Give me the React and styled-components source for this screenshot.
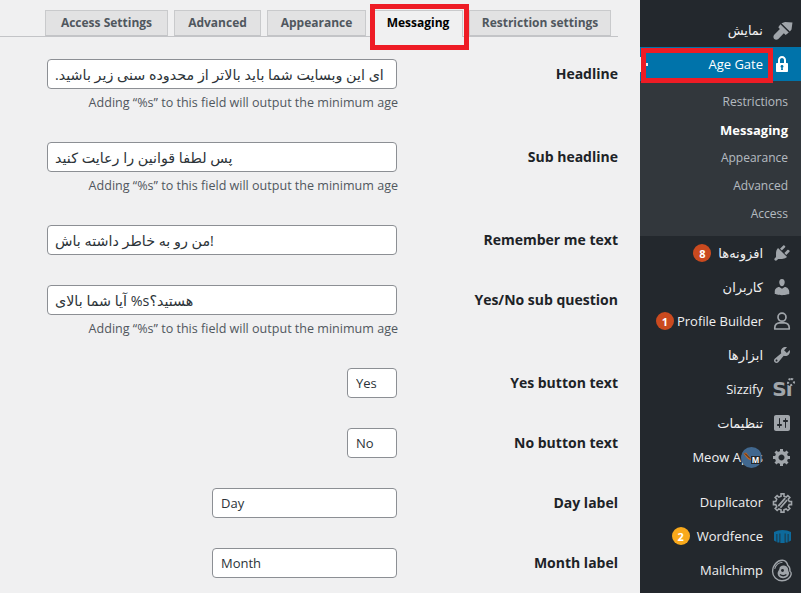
import React from "react";
import styled, { createGlobalStyle } from "styled-components";

const GlobalStyle = createGlobalStyle`
  html, body {
    margin: 0;
    height: 100%;
    overflow: hidden;
    background: #f0f0f1;
  }
  * { box-sizing: border-box; }
`;

const uiFont = `"Open Sans", "DejaVu Sans", sans-serif`;

const Page = styled.div`
  display: flex;
  width: 801px;
  height: 593px;
  overflow: hidden;
  font-family: ${uiFont};
`;

const Content = styled.main`
  width: 640px;
  flex: none;
`;

const TabBar = styled.nav`
  display: flex;
  gap: 6px;
  width: 618px;
  height: 37px;
  padding: 10px 0 0 45px;
  border-bottom: 1px solid #c3c4c7;
`;

const Tab = styled.div`
  position: relative;
  width: ${(p) => p.$w}px;
  height: ${(p) => (p.$active ? 27 : 26)}px;
  flex: none;
  margin-left: ${(p) => (p.$active ? 1 : 0)}px;
  border: 1px solid #c9cacc;
  border-bottom: ${(p) => (p.$active ? "none" : "1px solid #c3c4c7")};
  background: ${(p) => (p.$active ? "#f0f0f1" : "#e2e2e3")};
  color: ${(p) => (p.$active ? "#000" : "#50575e")};
  font-size: 12px;
  font-weight: 700;
  line-height: 24px;
  text-align: center;
  white-space: nowrap;
`;

const TabHighlight = styled.span`
  position: absolute;
  left: -4px;
  top: -7px;
  width: 99px;
  height: 46px;
  border: 5px solid #ee1c25;
`;

const Form = styled.div`
  display: flex;
  flex-direction: column;
  gap: 30px;
  width: 618px;
  padding-top: 22px;
`;

const Row = styled.div`
  display: grid;
  grid-template-columns: 397px 221px;
  align-items: start;
`;

const Field = styled.div`
  display: flex;
  flex-direction: column;
  align-items: flex-end;
`;

const TextInput = styled.input`
  display: block;
  width: ${(p) => p.$w}px;
  height: 30px;
  padding: ${(p) => (p.$fa ? "0 3px 0 7px" : "0 8px")};
  border: 1px solid #8c8f94;
  border-radius: 4px;
  background: #fff;
  color: #2c3338;
  font-family: ${uiFont};
  font-size: ${(p) => (p.$fa ? 14.3 : 13)}px;
  outline: none;
`;

const Hint = styled.p`
  margin: 5px -1px 0 0;
  height: 18px;
  color: #50575e;
  font-size: 12.55px;
  line-height: 18px;
  white-space: nowrap;
`;

const Label = styled.label`
  color: #1d2327;
  font-size: 14px;
  font-weight: 700;
  line-height: 30px;
  text-align: right;
`;

const Sidebar = styled.aside`
  width: 161px;
  flex: none;
  padding-top: 13px;
  background: #23282d;
  overflow: hidden;
`;

const MenuItem = styled.div`
  position: relative;
  display: flex;
  align-items: center;
  justify-content: flex-end;
  height: 34px;
  margin-bottom: ${(p) => (p.$sep ? 11 : 0)}px;
  background: ${(p) => (p.$current ? "#0073aa" : "transparent")};
  color: ${(p) => (p.$current ? "#fff" : "#f0f0f1")};
  font-size: 13px;
  white-space: nowrap;
`;

const IconSlot = styled.span`
  display: flex;
  align-items: center;
  justify-content: center;
  width: 38px;
  height: 100%;
  flex: none;
  color: ${(p) => p.$color || "#a0a5aa"};

  svg {
    display: block;
    fill: currentColor;
  }
`;

const Badge = styled.span`
  display: flex;
  align-items: center;
  justify-content: center;
  width: 18px;
  height: 18px;
  margin-right: ${(p) => p.$gap}px;
  border-radius: 50%;
  background: ${(p) => p.$bg || "#ca4a1f"};
  color: #fff;
  font-size: 11px;
  font-weight: 700;
`;

const MeowBadge = styled.span`
  position: absolute;
  left: 101px;
  top: 7px;
  width: 21px;
  height: 21px;
`;

const MenuHighlight = styled.span`
  position: absolute;
  left: 1px;
  top: 1px;
  width: 132px;
  height: 35px;
  border: 5px solid #ee1c25;
`;

const CurrentTick = styled.span`
  position: absolute;
  left: 0;
  top: 10px;
  width: 2px;
  height: 15px;
  background: #f0f0f1;
`;

const CurrentDot = styled.span`
  position: absolute;
  left: 6px;
  top: 16px;
  width: 2px;
  height: 3px;
  background: #f0f0f1;
`;

const SubMenu = styled.div`
  padding: 7px 0 8px;
  background: #32373c;
`;

const SubItem = styled.div`
  height: 28px;
  padding-right: 13px;
  color: ${(p) => (p.$active ? "#fff" : "rgba(240, 246, 252, 0.7)")};
  font-size: ${(p) => (p.$active ? 13 : 12)}px;
  font-weight: ${(p) => (p.$active ? 700 : 400)};
  line-height: 28px;
  text-align: right;
`;

const SiMark = styled.span`
  position: relative;
  color: #a0a5aa;
  font-family: "DejaVu Sans", sans-serif;
  font-size: 20px;
  font-weight: 700;
  letter-spacing: -1px;
  line-height: 20px;
`;

const SiSpark = styled.span`
  position: absolute;
  right: -3px;
  top: -1px;
  width: 8px;
  height: 8px;
  border-radius: 50%;
  background: #23282d;
  border: 2px dotted #a0a5aa;
`;

const BrushIcon = () => (
  <svg width="21" height="21" viewBox="0 0 20 20">
    <path d="M9 3l3.500-1.200L19.500 2.300 18.600 9 17 11zM8 4l8 8-3 2.200-1.700-1.700L6 18c-1 1-2.900 1-3.900 0s-1-2.900 0-3.900l5.400-5.500L6 7z" />
  </svg>
);

const LockIcon = () => (
  <svg width="20" height="20" viewBox="0 0 20 20">
    <path d="M14 9h1c.55 0 1 .45 1 1v7c0 .55-.45 1-1 1H5c-.55 0-1-.45-1-1v-7c0-.55.45-1 1-1h1V6c0-2.21 1.79-4 4-4s4 1.79 4 4v3zm-2 0V6c0-1.1-.9-2-2-2s-2 .9-2 2v3h4zm-1 7l-.36-2.150c.51-.24.86-.75.86-1.350 0-.83-.67-1.500-1.500-1.500s-1.500.67-1.500 1.500c0 .6.35 1.110.86 1.350L9 16h2z" />
  </svg>
);

const PluginIcon = () => (
  <svg width="20" height="20" viewBox="0 0 20 20">
    <path d="M13.11 4.36L9.87 7.6 8 5.73l3.24-3.24c.35-.34 1.05-.2 1.56.32.52.51.66 1.21.31 1.55zm-8 1.77l.91-1.12 9.01 9.01-1.19.84c-.71.71-2.63 1.16-3.82 1.16H6.14L4.9 17.26c-.59.59-1.54.59-2.12 0-.59-.58-.59-1.53 0-2.12l1.24-1.24v-3.88c0-1.13.4-3.19 1.09-3.89zm7.26 3.97l3.24-3.24c.34-.35 1.04-.21 1.55.31.52.51.66 1.21.31 1.55l-3.24 3.25z" />
  </svg>
);

const UsersIcon = () => (
  <svg width="20" height="20" viewBox="0 0 20 20">
    <path d="M10 9.25c-2.27 0-2.73-3.44-2.73-3.44C7 4.02 7.82 2 9.97 2c2.16 0 2.98 2.02 2.71 3.81 0 0-.41 3.44-2.68 3.44zm0 2.57L12.72 10c2.39 0 4.52 2.33 4.52 4.53v2.49s-3.65 1.13-7.24 1.13c-3.65 0-7.24-1.13-7.24-1.13v-2.49c0-2.25 1.94-4.48 4.47-4.48z" />
  </svg>
);

const ProfileIcon = () => (
  <svg width="20" height="20" viewBox="0 0 20 20">
    <circle cx="10" cy="6.200" r="4" fill="none" stroke="currentColor" strokeWidth="1.700" />
    <path
      d="M2.800 18v-1.600c0-2.600 2.200-4.600 4.600-4.600h5.200c2.400 0 4.600 2 4.600 4.600V18z"
      fill="none"
      stroke="currentColor"
      strokeWidth="1.700"
      strokeLinejoin="round"
    />
  </svg>
);

const ToolsIcon = () => (
  <svg width="20" height="20" viewBox="0 0 20 20">
    <path d="M16.68 9.77c-1.34 1.34-3.3 1.67-4.95.99l-5.41 6.52c-.99.99-2.59.99-3.58 0s-.99-2.59 0-3.57l6.52-5.42c-.68-1.65-.35-3.61.99-4.95 1.28-1.28 3.12-1.62 4.72-1.06l-2.89 2.89 2.82 2.82 2.86-2.87c.53 1.58.18 3.39-1.08 4.65zM3.81 16.21c.4.39 1.04.39 1.43 0 .4-.4.4-1.04 0-1.43-.39-.4-1.03-.4-1.43 0-.39.39-.39 1.03 0 1.43z" />
  </svg>
);

const SettingsIcon = () => (
  <svg width="20" height="20" viewBox="0 0 20 20">
    <path d="M18 16V4c0-1.1-.9-2-2-2H4c-1.1 0-2 .9-2 2v12c0 1.1.9 2 2 2h12c1.1 0 2-.9 2-2zM8 11h1c.55 0 1 .45 1 1s-.45 1-1 1H8v1.5c0 .28-.22.5-.5.5s-.5-.22-.5-.5V13H6c-.55 0-1-.45-1-1s.45-1 1-1h1V5.5c0-.28.22-.5.5-.5s.5.22.5.5V11zm5-2h-1c-.55 0-1-.45-1-1s.45-1 1-1h1V5.5c0-.28.22-.5.5-.5s.5.22.5.5V7h1c.55 0 1 .45 1 1s-.45 1-1 1h-1v5.5c0 .28-.22.5-.5.5s-.5-.22-.5-.5V9z" />
  </svg>
);

const gearPath =
  "M18 12h-2.18c-.17.7-.44 1.35-.81 1.93l1.54 1.54-2.1 2.1-1.54-1.54c-.58.36-1.23.63-1.91.79V19H8v-2.18c-.68-.16-1.33-.43-1.91-.79l-1.54 1.54-2.12-2.12 1.54-1.54c-.36-.58-.63-1.23-.79-1.91H1V9.03h2.17c.16-.7.44-1.35.8-1.94L2.43 5.55l2.1-2.1 1.54 1.54c.58-.37 1.24-.64 1.93-.81V2h3v2.18c.68.16 1.33.43 1.91.79l1.54-1.54 2.12 2.12-1.54 1.54c.36.59.64 1.24.8 1.94H18V12zm-8.5 1.5c1.66 0 3-1.34 3-3s-1.34-3-3-3-3 1.34-3 3 1.34 3 3 3z";

const GearIcon = () => (
  <svg width="20" height="20" viewBox="0 0 20 20">
    <path d={gearPath} />
  </svg>
);

const DuplicatorIcon = () => (
  <svg width="21" height="21" viewBox="0 0 20 20">
    <path
      d="M18.600 12h-2.200l-.9 2.100 1.500 1.600-1.900 1.900-1.600-1.500-2.100.9v2.200H8.600V17l-2.100-.9-1.600 1.500L3 15.700l1.500-1.600-.9-2.100H1.400V9h2.200l.9-2.100L3 5.300l1.900-1.900 1.600 1.500 2.100-.9V1.800h2.800V4l2.100.9 1.600-1.500L17 5.300l-1.500 1.600.9 2.100h2.200z"
      fill="none"
      stroke="currentColor"
      strokeWidth="1.500"
    />
    <path d="M6 13.400 12.600 5.800M8 15l6.400-7.400" stroke="currentColor" strokeWidth="1.700" />
  </svg>
);

const WordfenceIcon = () => (
  <svg width="17" height="14" viewBox="0 0 17 14">
    <path d="M0 3 4 1.600 8.500 1l4.500 .6L17 3v8.500l-2.500 1.500V5h-.8v8.500h-2.200V4.500h-.8v9.500H6.300V4.500h-.8v9H3.300V5h-.8v8L0 11.500z" />
  </svg>
);

const MailchimpIcon = () => (
  <svg width="22" height="23" viewBox="0 0 21 22">
    <path
      d="M11 1.200C6 1 1.500 6 1.500 12c0 4.800 4 8.800 9 8.800 4.500 0 8.300-2.600 8.800-6.400.2-1.400-.5-2.300-1.200-2.700.2-2.200-.5-4.500-2-5.500C15.300 3.200 13.800 1.300 11 1.200z"
      fill="none"
      stroke="currentColor"
      strokeWidth="1.300"
    />
    <path d="M3.500 9.500C4.500 6 7.500 3.500 11 3.200" fill="none" stroke="currentColor" strokeWidth="1" />
    <path d="M8 9.500c0-2 2-3.500 4.500-3.200 2.400.3 4 2 4 4.600 0 .8.800 1.300.8 2.600 0 3-3 5-6 4.800-3-.2-5-2-5-4.500 0-1.800 1-2.500 1.700-4.300z" />
    <circle cx="11" cy="11" r="1.400" fill="#23282d" />
    <path d="M8.500 14.800c1.800 1.400 4.500 1.400 6.200 0" fill="none" stroke="#23282d" strokeWidth="1.200" />
  </svg>
);

const MeowIcon = () => (
  <svg width="21" height="21" viewBox="0 0 21 21">
    <circle cx="10.500" cy="10.500" r="10.500" fill="#41688f" />
    <path d="M2.500 6.500 5 5.500l4 5 3 1.500v1.800c-3 .2-6.500-2.500-9.500-7.300z" fill="#c9651c" />
    <path d="M4 6.500 9 11.500" stroke="#1d2327" strokeWidth="1" />
    <rect x="10" y="9" width="9" height="8" fill="#23282d" />
    <text x="14.500" y="15.500" textAnchor="middle" fontSize="8" fontWeight="700" fontFamily="Open Sans, sans-serif" fill="#fff">
      M
    </text>
  </svg>
);

const tabs = [
  { name: "Access Settings", w: 123 },
  { name: "Advanced", w: 87 },
  { name: "Appearance", w: 99 },
  { name: "Messaging", w: 90, active: true },
  { name: "Restriction settings", w: 142 },
];

const hintText = "Adding “%s” to this field will output the minimum age";

const fields = [
  {
    label: "Headline",
    value: "\u202Bای این وبسایت شما باید بالاتر از محدوده سنی زیر باشید.\u202C",
    w: 350,
    fa: true,
    hint: true,
  },
  { label: "Sub headline", value: "پس لطفا قوانین را رعایت کنید", w: 350, fa: true, hint: true },
  { label: "Remember me text", value: "من رو به خاطر داشته باش!", w: 350, fa: true },
  { label: "Yes/No sub question", value: "آیا شما بالای %sهستید؟", w: 350, fa: true, hint: true },
  { label: "Yes button text", value: "Yes", w: 50 },
  { label: "No button text", value: "No", w: 50 },
  { label: "Day label", value: "Day", w: 185 },
  { label: "Month label", value: "Month", w: 185 },
];

const subItems = ["Restrictions", "Messaging", "Appearance", "Advanced", "Access"];

export default function App() {
  return (
    <>
      <GlobalStyle />
      <Page>
        <Content>
          <TabBar>
            {tabs.map((t) => (
              <Tab key={t.name} $w={t.w} $active={t.active}>
                {t.name}
                {t.active && <TabHighlight />}
              </Tab>
            ))}
          </TabBar>
          <Form>
            {fields.map((f) => (
              <Row key={f.label}>
                <Field>
                  <TextInput $w={f.w} $fa={f.fa} value={f.value} readOnly />
                  {f.hint && <Hint>{hintText}</Hint>}
                </Field>
                <Label>{f.label}</Label>
              </Row>
            ))}
          </Form>
        </Content>

        <Sidebar>
          <MenuItem>
            <span>نمایش</span>
            <IconSlot><BrushIcon /></IconSlot>
          </MenuItem>
          <MenuItem $current>
            <CurrentTick />
            <CurrentDot />
            <span>Age Gate</span>
            <IconSlot $color="#fff"><LockIcon /></IconSlot>
            <MenuHighlight />
          </MenuItem>
          <SubMenu>
            {subItems.map((s) => (
              <SubItem key={s} $active={s === "Messaging"}>{s}</SubItem>
            ))}
          </SubMenu>
          <MenuItem>
            <Badge $gap={7}>8</Badge>
            <span>افزونه‌ها</span>
            <IconSlot><PluginIcon /></IconSlot>
          </MenuItem>
          <MenuItem>
            <span>کاربران</span>
            <IconSlot><UsersIcon /></IconSlot>
          </MenuItem>
          <MenuItem>
            <Badge $gap={3}>1</Badge>
            <span>Profile Builder</span>
            <IconSlot><ProfileIcon /></IconSlot>
          </MenuItem>
          <MenuItem>
            <span>ابزارها</span>
            <IconSlot><ToolsIcon /></IconSlot>
          </MenuItem>
          <MenuItem>
            <span>Sizzify</span>
            <IconSlot><SiMark>Si<SiSpark /></SiMark></IconSlot>
          </MenuItem>
          <MenuItem>
            <span>تنظیمات</span>
            <IconSlot><SettingsIcon /></IconSlot>
          </MenuItem>
          <MenuItem $sep>
            <span>Meow Apps</span>
            <IconSlot><GearIcon /></IconSlot>
            <MeowBadge><MeowIcon /></MeowBadge>
          </MenuItem>
          <MenuItem>
            <span>Duplicator</span>
            <IconSlot><DuplicatorIcon /></IconSlot>
          </MenuItem>
          <MenuItem>
            <Badge $gap={7} $bg="#f9a91b">2</Badge>
            <span>Wordfence</span>
            <IconSlot $color="#0d6a9c"><WordfenceIcon /></IconSlot>
          </MenuItem>
          <MenuItem>
            <span>Mailchimp</span>
            <IconSlot><MailchimpIcon /></IconSlot>
          </MenuItem>
        </Sidebar>
      </Page>
    </>
  );
}
